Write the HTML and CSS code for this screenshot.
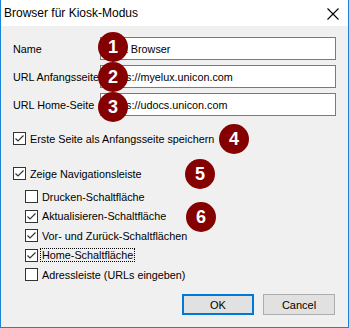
FILE: index.html
```html
<!DOCTYPE html>
<html lang="de">
<head>
    <meta charset="UTF-8">
    <title>Browser für Kiosk-Modus</title>
    <link rel="stylesheet" href="styles.css">
</head>
<body>
    <div class="window">
        <!-- Title bar -->
        <div class="titlebar">
            <span class="title">Browser für Kiosk-Modus</span>
            <svg class="close" width="12" height="12" viewBox="0 0 12 12">
                <path d="M0.5 0.5 L11.5 11.5 M11.5 0.5 L0.5 11.5" stroke="#000" stroke-width="1.1" fill="none"/>
            </svg>
        </div>

        <div class="content">
            <!-- Text fields -->
            <div class="fields">
                <span class="field-label">Name</span>
                <div class="input">Test Browser</div>
                <span class="field-label">URL Anfangsseite</span>
                <div class="input">https://myelux.unicon.com</div>
                <span class="field-label">URL Home-Seite</span>
                <div class="input">https://udocs.unicon.com</div>
            </div>

            <div class="check first-check">
                <span class="box checked"></span>
                <span class="check-text">Erste Seite als Anfangsseite speichern</span>
            </div>

            <div class="check nav-check">
                <span class="box checked"></span>
                <span class="check-text">Zeige Navigationsleiste</span>
            </div>

            <div class="sub-checks">
                <div class="check sub">
                    <span class="box"></span>
                    <span class="check-text">Drucken-Schaltfläche</span>
                </div>
                <div class="check sub">
                    <span class="box checked"></span>
                    <span class="check-text">Aktualisieren-Schaltfläche</span>
                </div>
                <div class="check sub">
                    <span class="box checked"></span>
                    <span class="check-text">Vor- und Zurück-Schaltflächen</span>
                </div>
                <div class="check sub">
                    <span class="box checked"></span>
                    <span class="check-text focused">Home-Schaltfläche</span>
                </div>
                <div class="check sub">
                    <span class="box"></span>
                    <span class="check-text">Adressleiste (URLs eingeben)</span>
                </div>
            </div>

            <div class="buttons">
                <button class="btn default">OK</button>
                <button class="btn">Cancel</button>
            </div>
        </div>

        <!-- Numbered callouts -->
        <div class="badge b1">1</div>
        <div class="badge b2">2</div>
        <div class="badge b3">3</div>
        <div class="badge b4">4</div>
        <div class="badge b5">5</div>
        <div class="badge b6">6</div>
    </div>
</body>
</html>
```

FILE: styles.css
```css
body {
    margin: 0;
    padding: 0;
    font-family: "Segoe UI", "Liberation Sans", Arial, sans-serif;
    font-size: 10.8px;
    color: #000;
    background-color: #f0f0f0;
}
.window {
    position: relative;
    width: 349px;
    height: 328px;
    box-sizing: border-box;
    border: 1px solid #1883d7;
    border-top: none;
    background-color: #f0f0f0;
    overflow: hidden;
}
.titlebar {
    height: 26px;
    background-color: #fff;
    display: flex;
    align-items: center;
    justify-content: space-between;
    padding: 0 9px 0 3px;
}
.title {
    font-size: 12px;
    padding-bottom: 1px;
}
.close {
    margin-top: 2px;
}
.content {
    padding: 11px 12px 0 12px;
}
.fields {
    display: grid;
    grid-template-columns: 87px 1fr;
    grid-auto-rows: 23px;
    row-gap: 5px;
    align-items: center;
}
.field-label {
    white-space: nowrap;
}
.input {
    height: 23px;
    box-sizing: border-box;
    border: 1px solid #7a7a7a;
    background-color: #fff;
    padding: 0 3px 0 7px;
    display: flex;
    align-items: center;
    white-space: nowrap;
    overflow: hidden;
}
.check {
    display: flex;
    align-items: center;
    gap: 3px;
    height: 17px;
}
.first-check {
    margin-top: 14px;
}
.nav-check {
    margin-top: 18px;
}
.sub-checks {
    margin-top: 5px;
    padding-left: 12px;
}
.check.sub {
    height: 19.5px;
}
.box {
    width: 13px;
    height: 13px;
    box-sizing: border-box;
    border: 1px solid #333;
    background-color: #fff;
    flex-shrink: 0;
}
.box.checked {
    background-image: url("data:image/svg+xml,%3Csvg xmlns='http://www.w3.org/2000/svg' width='11' height='11' viewBox='0 0 11 11'%3E%3Cpath d='M1.5 5.5 L4 8 L9.5 2.5' stroke='%23333' stroke-width='1.2' fill='none'/%3E%3C/svg%3E");
    background-repeat: no-repeat;
}
.check-text {
    white-space: nowrap;
    padding: 0 1px;
}
.focused {
    outline: 1px dotted #000;
}
.buttons {
    display: flex;
    justify-content: flex-end;
    gap: 9px;
    margin-top: 9.5px;
    padding-right: 1px;
}
.btn {
    width: 72px;
    height: 21px;
    box-sizing: border-box;
    font-family: inherit;
    font-size: 11px;
    color: #000;
    background-color: #e1e1e1;
    border: 1px solid #adadad;
    padding: 0;
}
.btn.default {
    border: 2px solid #0078d7;
}
.badge {
    position: absolute;
    width: 30px;
    height: 30px;
    border-radius: 50%;
    background-color: #850000;
    color: #fff;
    font-family: "Liberation Sans", Arial, sans-serif;
    font-weight: bold;
    font-size: 18px;
    display: flex;
    align-items: center;
    justify-content: center;
}
.b1 { left: 97px; top: 32px; }
.b2 { left: 97px; top: 62px; }
.b3 { left: 97px; top: 92px; }
.b4 { left: 218px; top: 124px; }
.b5 { left: 184px; top: 159px; }
.b6 { left: 185px; top: 202px; }
```
